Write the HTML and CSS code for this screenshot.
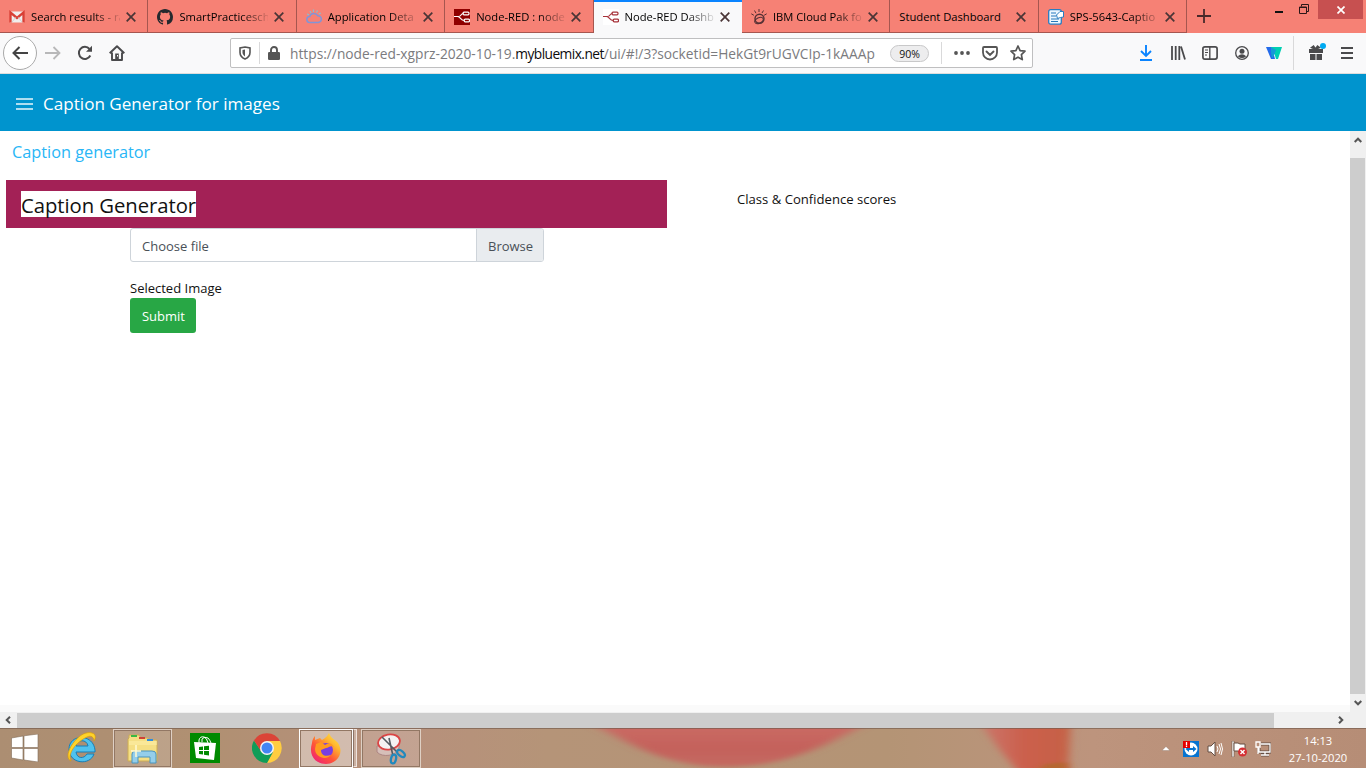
FILE: index.html
```html
<!DOCTYPE html>
<html lang="en">
<head>
<meta charset="utf-8">
<title>Node-RED Dashboard</title>
<link rel="stylesheet" href="styles.css">
</head>
<body>
<svg class="defs" width="0" height="0">
  <symbol id="x" viewBox="0 0 10 10"><path d="M.7.7 9.3 9.3M9.3.7.7 9.3" stroke="#4a3536" stroke-width="1.7" fill="none"/></symbol>
  <symbol id="flow" viewBox="0 0 16 16"><g fill="none" stroke="currentColor" stroke-width="1.200"><path d="M0 7.500h4.500C7.500 7.500 6.500 4.500 9.500 4.500M3.500 7.500C7 7.500 6 11.500 10.500 11.500"/><rect x="9" y="3.200" width="6" height="2.600" rx="1"/><rect x="10.200" y="10.200" width="5.300" height="2.600" rx="1"/></g></symbol>
</svg>
<div class="screen">
  <header class="tabs">
    <div class="tab"><svg class="fav" viewBox="0 0 16 16"><path d="M1 2.500h14v11H1z" fill="#f1eeee"/><path d="M1.500 13.500V3.500L8 9l6.500-5.500v10" fill="none" stroke="#d93f35" stroke-width="2.300"/><path d="m3 13 4-5m6 5L9 8" stroke="#c9c3c3" stroke-width=".7"/></svg><span class="name">Search results - ra</span><svg class="close"><use href="#x"/></svg></div>
    <div class="tab"><svg class="fav" viewBox="0 0 16 16"><path fill="#24292e" d="M8 0C3.580 0 0 3.580 0 8c0 3.540 2.290 6.530 5.470 7.590.4.070.55-.17.55-.38v-1.490c-2.010.37-2.530-.49-2.690-.94-.09-.23-.48-.94-.82-1.130-.28-.15-.68-.52-.01-.53.63-.01 1.080.58 1.230.82.720 1.210 1.870.87 2.330.66.070-.52.28-.87.51-1.070-1.780-.2-3.640-.89-3.640-3.950 0-.87.31-1.590.82-2.150-.08-.2-.36-1.020.08-2.120 0 0 .67-.21 2.200.82a7.400 7.400 0 0 1 4 0c1.530-1.040 2.200-.82 2.200-.82.44 1.100.16 1.920.08 2.120.51.56.82 1.270.82 2.150 0 3.070-1.870 3.750-3.650 3.950.29.25.54.73.54 1.480v2.200c0 .21.15.46.55.38A8 8 0 0 0 16 8c0-4.420-3.580-8-8-8z"/></svg><span class="name">SmartPracticesch</span><svg class="close"><use href="#x"/></svg></div>
    <div class="tab"><svg class="fav" viewBox="0 0 16 16" fill="none"><path d="M4 13.500a3 3 0 0 1-.3-6 4.400 4.400 0 0 1 8-.8 3.400 3.400 0 0 1 .5 6.800z" stroke="#8095d8" stroke-width="1.500"/><path d="M5 4 4 2m3.500.9V.5M10.500 3.500l1-2m1.300 3.500 2-1M1 5l2 .7" stroke="#87bfd2" stroke-width="1.200"/></svg><span class="name">Application Deta</span><svg class="close"><use href="#x"/></svg></div>
    <div class="tab"><svg class="fav flow-dark" viewBox="0 0 16 16"><path fill="#8f0000" d="M0 0h16v16H0z"/><use href="#flow"/></svg><span class="name">Node-RED : node</span><svg class="close"><use href="#x"/></svg></div>
    <div class="tab active"><svg class="fav flow-light" viewBox="0 0 16 16"><path fill="#fff" d="M0 0h16v16H0z"/><use href="#flow"/></svg><span class="name">Node-RED Dashb</span><svg class="close"><use href="#x"/></svg></div>
    <div class="tab"><svg class="fav" viewBox="0 0 16 16" fill="none" stroke="#553034"><circle cx="8.500" cy="9.700" r="4.500" stroke-width="1.400"/><ellipse cx="8" cy="11.500" rx="4.500" ry="2.700" transform="rotate(-25 8 11.500)"/><path d="M8 0v3M3.500 1.500l1.500 2.700M12.500 1.500 11 4M.3 4.800l2.600 1.500m12.800-1.500-2.600 1.500"/></svg><span class="name">IBM Cloud Pak fo</span><svg class="close"><use href="#x"/></svg></div>
    <div class="tab"><span class="name wide">Student Dashboard</span><svg class="close"><use href="#x"/></svg></div>
    <div class="tab"><svg class="fav" viewBox="0 0 16 16"><rect x=".7" y=".7" width="12.600" height="14.500" rx="2" fill="#edf7ff" stroke="#287cc1" stroke-width="1.300"/><path d="M3 4h5M3 7h5M3 10h8M3 12.500h7" stroke="#2779bb" stroke-width="1.200"/><path d="m8.500 6 3.500-3.500h3.500V8l-3 .5-3 1z" fill="#fff" stroke="#287cc1"/></svg><span class="name">SPS-5643-Captio</span><svg class="close"><use href="#x"/></svg></div>
    <svg class="plus" viewBox="0 0 14 14"><path d="M7 0v14M0 7h14" stroke="#48292a" stroke-width="1.800"/></svg>
    <div class="winbtns">
      <svg class="minimize" viewBox="0 0 8 2"><path d="M0 0h8v2H0z" fill="#111"/></svg>
      <svg class="restore" viewBox="0 0 10 10"><path d="M2.500 2.500v-2h7v7h-2M.5 3h7v6.500h-7zM.5 3.500h7" fill="none" stroke="#2b1718"/></svg>
      <div class="exit"><svg viewBox="0 0 8 8"><path d="m.5.5 7 7m0-7-7 7" stroke="#fff" stroke-width="1.700"/></svg></div>
    </div>
  </header>

  <nav class="toolbar">
    <div class="back"><svg viewBox="0 0 16 14"><path d="M16 7H1.500M7.500 1l-6 6 6 6" fill="none" stroke="#444" stroke-width="2"/></svg></div>
    <svg class="forward" viewBox="0 0 16 14"><path d="M0 7h14.500M8.500 1l6 6-6 6" fill="none" stroke="#b8b8b9" stroke-width="1.800"/></svg>
    <svg class="reload" viewBox="0 0 16 16"><path d="M13.300 10.500A6 6 0 1 1 12.500 4" fill="none" stroke="#4a4a4c" stroke-width="2"/><path d="M15 .8v6H9z" fill="#4a4a4c"/></svg>
    <svg class="home" viewBox="0 0 16 16"><path d="m.7 8.300 7.300-7 7.300 7M3 7.500V15h10V7.500" fill="none" stroke="#4a4a4c" stroke-width="1.900" stroke-linejoin="round"/><path d="M6.200 8.500h3.600V15H6.200z" fill="#4a4a4c"/><path d="M8 10h1v1.500H8z" fill="#fff"/></svg>
    <div class="address">
      <svg class="shield" viewBox="0 0 12 14"><path d="M6 1 11 2v4.500c0 3-2 5.200-5 6.500-3-1.300-5-3.500-5-6.500V2z" fill="none" stroke="#555" stroke-width="1.600"/><path d="M6 3.500v7C4.300 9.300 3.500 8 3.500 6.500V4z" fill="#555"/></svg>
      <i class="rule"></i>
      <svg class="lock" viewBox="0 0 12 14"><path d="M3 7V4a3 3 0 0 1 6 0v3" fill="none" stroke="#555" stroke-width="1.900"/><rect y="6" width="12" height="8" rx="1.300" fill="#555"/></svg>
      <span class="url">https://node-red-xgprz-2020-10-19.<b>mybluemix.net</b>/ui/#!/3?socketid=HekGt9rUGVCIp-1kAAAp</span>
      <span class="zoom">90%</span>
      <i class="rule second"></i>
      <svg class="dots" viewBox="0 0 16 4" fill="#555"><circle cx="2" cy="2" r="1.900"/><circle cx="8" cy="2" r="1.900"/><circle cx="14" cy="2" r="1.900"/></svg>
      <svg class="pocket" viewBox="0 0 16 15"><path d="M2 1h12q1 0 1 1v4.500a7 7 0 0 1-14 0V2q0-1 1-1z" fill="none" stroke="#555" stroke-width="1.800"/><path d="M4.500 5.500 8 9l3.500-3.500" fill="none" stroke="#555" stroke-width="1.900" stroke-linecap="round"/></svg>
      <svg class="star" viewBox="0 0 16 16"><path d="m8 1 2.100 4.600 4.900.6-3.600 3.400.9 5L8 12.200l-4.300 2.400.9-5L1 6.200l4.900-.6z" fill="none" stroke="#555" stroke-width="1.700" stroke-linejoin="round"/></svg>
    </div>
    <div class="actions">
      <svg class="download" viewBox="0 0 12 16"><path d="M6 0v11M1 6l5 5 5-5M0 15h12" fill="none" stroke="#0a84ff" stroke-width="1.900"/></svg>
      <svg class="library" viewBox="0 0 15 14"><path d="M1 0v14M4.700 0v14M8.300 0v14M10 .5l4 13" stroke="#4a4a4c" stroke-width="1.800"/></svg>
      <svg class="sidebar" viewBox="0 0 16 14"><rect x=".9" y=".9" width="14.200" height="12.200" rx="2" fill="none" stroke="#4a4a4c" stroke-width="1.700"/><path d="M7.800 1v12" stroke="#4a4a4c" stroke-width="1.400"/><path d="M3 4h3M3 6.500h3M3 9h2" stroke="#4a4a4c"/></svg>
      <svg class="account" viewBox="0 0 14 14"><circle cx="7" cy="7" r="6.300" fill="none" stroke="#4a4a4c" stroke-width="1.300"/><circle cx="7" cy="5.300" r="2.500" fill="#4a4a4c"/><path d="M2.800 10.200Q7 6.500 11.200 10.200 7 14 2.800 10.200" fill="#4a4a4c"/></svg>
      <svg class="wappalyzer" viewBox="0 0 16 12"><path d="M0 0h6l3 12H5z" fill="#246bea"/><path d="M5 0h11l-4 12h-2L8.500 7 6 11z" fill="#00cfb2"/><path d="m5 0 5 3-1.500 4L6 11z" fill="#1798d8"/></svg>
      <i class="rule"></i>
      <svg class="gift" viewBox="0 0 18 18"><path d="M1 6h14v4H1zM2 11h5.500v6H2zM8.500 11H14v6H8.500z" fill="#4a4a4c"/><path d="m7.500 6-2-3-2 1.500L7 6m.5 0 2-3 2 1.500L8 6" fill="none" stroke="#4a4a4c" stroke-width="1.500"/><circle cx="15" cy="3" r="3" fill="#00aaf2"/></svg>
      <svg class="burger" viewBox="0 0 12 12"><path d="M0 1h12M0 6h12M0 11h12" stroke="#4a4a4c" stroke-width="1.900"/></svg>
    </div>
  </nav>

  <section class="app-header">
    <svg viewBox="0 0 17 12"><path d="M0 1h17M0 6h17M0 11h17" stroke="#e8f6fc" stroke-width="1.700"/></svg>
    <h1><span>Caption Generator for images</span></h1>
  </section>

  <div class="viewport">
    <main>
      <h2><span>Caption generator</span></h2>
      <div class="columns">
        <section class="card">
          <div class="banner"><span class="mark">Caption Generator</span></div>
          <form class="upload">
            <div class="file"><span class="choose">Choose file</span><span class="browse">Browse</span></div>
            <div class="selected">Selected Image</div>
            <button type="button"><span>Submit</span></button>
          </form>
        </section>
        <p class="scores">Class &amp; Confidence scores</p>
      </div>
    </main>
    <div class="vscroll"><svg viewBox="0 0 8 6"><path d="m.7 5 3.300-3.300L7.300 5" fill="none" stroke="#555" stroke-width="2"/></svg><div class="vthumb"></div><svg viewBox="0 0 8 6"><path d="M.7 1 4 4.300 7.300 1" fill="none" stroke="#555" stroke-width="2"/></svg></div>
  </div>
  <div class="hscroll"><svg viewBox="0 0 6 8"><path d="M5 .7 1.700 4 5 7.300" fill="none" stroke="#555" stroke-width="2"/></svg><div class="hthumb"></div><svg class="right" viewBox="0 0 6 8"><path d="M1 .7 4.300 4 1 7.300" fill="none" stroke="#555" stroke-width="2"/></svg></div>

  <footer class="taskbar">
    <svg class="wallpaper" viewBox="0 0 1366 40" preserveAspectRatio="none">
      <defs>
        <linearGradient id="wood"><stop offset="0" stop-color="#ac8e72"/><stop offset=".15" stop-color="#b09072"/><stop offset=".29" stop-color="#b7907c"/><stop offset=".4" stop-color="#b59478"/><stop offset=".65" stop-color="#b49475"/><stop offset=".8" stop-color="#bd947d"/><stop offset="1" stop-color="#b68d76"/></linearGradient>
        <linearGradient id="petal" x2="0" y2="1"><stop stop-color="#cd6f68"/><stop offset=".65" stop-color="#c4615b"/><stop offset="1" stop-color="#c46a61"/></linearGradient>
        <linearGradient id="petal2"><stop stop-color="#ca7a70"/><stop offset=".5" stop-color="#cc604d"/><stop offset="1" stop-color="#c56245"/></linearGradient>
        <filter id="soft" filterUnits="userSpaceOnUse" x="540" y="-40" width="580" height="120"><feGaussianBlur stdDeviation="7 2"/></filter>
        <filter id="edge" filterUnits="userSpaceOnUse" x="940" y="-40" width="180" height="120"><feGaussianBlur stdDeviation="5 1"/></filter>
      </defs>
      <path fill="url(#wood)" d="M0 0h1366v40H0z"/>
      <path filter="url(#soft)" fill="url(#petal)" d="M572-14h310l-20 12c-34 18-75 41-135 41-58 0-91-20-123-37z"/>
      <path filter="url(#edge)" fill="url(#petal2)" d="M975-12h96l-2 38-2 28h-40L1000 22z"/>
      <path filter="url(#edge)" fill="#b66731" d="m1034 44 12-8 20-2 3 12z"/>
      <path fill="#735b4d" opacity=".65" d="M0 0h1366v1H0z"/>
    </svg>
    <div class="task start"><svg width="28" height="28" viewBox="0 0 28 28" fill="#fff" stroke="#826b58" stroke-width=".6"><path d="m.5 4 11.500-2v11.500H.5zM13 1.800 27 0v13.500H13zM.5 14.500H12V26L.5 24zM13 14.500h14V28l-14-2z"/></svg></div>
    <div class="task ie"><svg width="32" height="32" viewBox="0 0 32 32"><path d="M29 22C25 34 4 32 4 17 4 2 28 1 30 18v2H11c1 7 8 7 11 2zM11 14h12c-1-7-11-7-12 0z" fill="#4fc2ee" stroke="#177fb7"/><path d="M6 29C-4 25 13-3 27 1c4 1 4 5 2 8 0-4-3-6-7-4C11 10 2 22 6 29z" fill="#ffd32b" stroke="#d99b0d" stroke-width=".7"/></svg></div>
    <div class="task explorer framed"><svg width="32" height="30" viewBox="0 0 32 30"><path d="M2 4V1h10l2 3h7l1 2h8v21H1V5z" fill="#f5df84" stroke="#cead52"/><path d="M4 1h6v2H4z" fill="#37b944"/><path d="M12 3h6v2h-6z" fill="#cf4236"/><path d="M20 5h6v2h-6z" fill="#308ddd"/><path d="M2 8h28M2 10h28" stroke="#fff1ac"/><path d="M5 29V20q0-3 4-3h16q4 0 4 3v9h-6v-6H11v6z" fill="#94ceea" stroke="#4b95bd"/><path d="M9 11v12M4 17h10" stroke="#fffbd4" stroke-width="1.500"/></svg></div>
    <div class="task store"><svg width="30" height="30" viewBox="0 0 30 30"><path fill="#008a00" d="M0 0h30v30H0z"/><path d="M9 10V7q1-4 5-3 3 1 4 6M12 9V6q2-3 6-1 2 2 3 5" fill="none" stroke="#fff" stroke-width="1"/><path d="m4 9 22 1-2 17-18-2z" fill="#fff"/><path d="m9 14 4-.5V17H9zm5-.7 5-.5V17h-5zM9 18h4v3.500L9 21zm5 0h5v4.500l-5-.8z" fill="#008a00"/></svg></div>
    <div class="task chrome"><svg width="30" height="30" viewBox="0 0 30 30"><path d="M15 8h13A15 15 0 0 1 15 30l6-11z" fill="#ffcd40"/><path d="M2 7.500A15 15 0 0 0 15 30l6-11-6 2-6-3z" fill="#0f9d58"/><path d="M2 7.500A15 15 0 0 1 28 8H15l-6 10z" fill="#db4437"/><circle cx="15" cy="15" r="7" fill="#f4f4f4"/><circle cx="15" cy="15" r="5.500" fill="#4285f4"/></svg></div>
    <div class="task firefox framed lit"><svg width="32" height="32" viewBox="0 0 32 32"><defs><linearGradient id="fox" x1="1" y1="0" x2=".2" y2="1"><stop stop-color="#fff44f"/><stop offset=".35" stop-color="#ffb52e"/><stop offset=".65" stop-color="#ff5636"/><stop offset="1" stop-color="#f02076"/></linearGradient></defs><path d="M2 10c0-3 2-6 3-7v4l5-2 2 2c3-2 5-3 7-7 2 6 7 7 9 10 7 11-2 21-12 21C6 31-2 23 2 10z" fill="url(#fox)"/><circle cx="16" cy="17" r="7" fill="#783ee0"/><path d="m6 11 5-2 4 3c4-2 6-3 9 2-4-2-5 1-8 1l-5 2c0 5 4 7 10 5-5 6-16 2-16-6z" fill="#ff9a20"/></svg></div>
    <div class="stack"></div>
    <div class="task snip framed"><svg width="32" height="32" viewBox="0 0 32 32"><path d="M2 13v6c5 6 20 4 22-4v-5z" fill="#d6bfb9" stroke="#ad8582"/><ellipse cx="14" cy="9" rx="11" ry="7.500" transform="rotate(-10 14 9)" fill="#f4f2f2" stroke="#db4545" stroke-width="1.800"/><path d="m7 4 15 15M14 5l4 18" stroke="#555b61" stroke-width="1.600"/><ellipse cx="18.500" cy="26" rx="2.500" ry="4.500" transform="rotate(12 18.500 26)" fill="none" stroke="#2189bd" stroke-width="2.300"/><ellipse cx="26" cy="20.500" rx="2.500" ry="4.500" transform="rotate(-50 26 20.500)" fill="none" stroke="#2189bd" stroke-width="2.300"/></svg></div>
    <div class="tray">
      <svg class="up" viewBox="0 0 8 5"><path d="M0 4.500 4 .5l4 4z" fill="#fff" stroke="#72594b" stroke-width=".3"/></svg>
      <svg class="tv" viewBox="0 0 16 16"><path d="M0 0h16v16H0z" fill="#0874d0"/><circle cx="8" cy="8" r="6.500" fill="#fff"/><path d="m2.500 8 3.500-3v2h4V5l3.500 3-3.500 3V9H6v2z" fill="#0874d0"/><path d="M0 0h7v7H0z" fill="#e60000"/><path d="M3.500 1v3.500M3.500 5v1" stroke="#fff" stroke-width="1.300"/></svg>
      <svg class="vol" viewBox="0 0 16 16"><path d="M1 5h3l4-4v14l-4-4H1z" fill="#fff" stroke="#654f43"/><path d="M10 5q2 3 0 6m2-8q3 5 0 10m2-11q3 6 0 12" fill="none" stroke="#fff" stroke-width="1"/></svg>
      <svg class="flag" viewBox="0 0 16 16"><path d="M1 0h2v16H1z" fill="#fff" stroke="#664e42" stroke-width=".6"/><path d="M3 2h4l2 1h5v8H8l-1-1H3z" fill="#fff" stroke="#664e42"/><circle cx="11.500" cy="11" r="4.500" fill="#d42f32"/><path d="m9.500 9 4 4m0-4-4 4" stroke="#fff" stroke-width="1.400"/></svg>
      <svg class="net" viewBox="0 0 16 16"><path d="M6 3h9v8H4V7m6 4v3m-4 0h8" fill="none" stroke="#654f43" stroke-width="3"/><path d="M6 3h9v8H4V7m6 4v3m-4 0h8M1 1h4v5H1zM3 6v7" fill="none" stroke="#fff" stroke-width="1.300"/></svg>
      <div class="clock"><span>14:13</span><span>27-10-2020</span></div>
    </div>
  </footer>
</div>
</body>
</html>
```
FILE: styles.css
```css
* { box-sizing: border-box; }
body { margin: 0; font-family: "Open Sans", "Noto Sans", sans-serif; color: #111; }
svg { display: block; flex: none; }
.defs { position: absolute; }
.screen { width: 1366px; height: 768px; display: flex; flex-direction: column; overflow: hidden; background: #fff; }

.tabs { height: 33px; flex: none; display: flex; background: #f68175; }
.tab { width: 148.400px; height: 33px; flex: none; display: flex; align-items: center; padding: 2px 0 0 9px; border-right: 1px solid #a6564f; border-bottom: 1px solid #a6564f; }
.tab.active { background: #f9f9fa; border-top: 2px solid #0a84ff; border-bottom: 0; border-right: 0; padding-top: 0; padding-bottom: 1px; }
.fav { width: 16px; height: 16px; margin-right: 6px; }
.flow-dark { color: #fff; }
.flow-light { color: #a63038; }
.name { width: 89px; font-size: 11.200px; line-height: 18px; color: #000; white-space: nowrap; overflow: hidden; -webkit-mask-image: linear-gradient(90deg, #000 62px, transparent 92px); mask-image: linear-gradient(90deg, #000 62px, transparent 92px); }
.name.wide { width: 111px; -webkit-mask-image: none; mask-image: none; }
.close { width: 10px; height: 10px; margin-left: 6px; }
.plus { width: 14px; height: 14px; margin: 9px 0 0 10px; }
.winbtns { display: flex; margin-left: auto; margin-right: 3px; }
.minimize { width: 10px; height: 2px; margin: 11px 15px 0 0; }
.restore { width: 10px; height: 10px; margin: 4px 9px 0 0; }
.exit { width: 45px; height: 19px; background: #c75050; display: flex; align-items: center; justify-content: center; }
.exit svg { width: 8px; height: 8px; }

.toolbar { height: 41px; flex: none; display: flex; align-items: center; background: #f9f9fa; border-bottom: 1px solid #ddd; }
.back { width: 34px; height: 34px; margin-left: 3px; border: 1px solid #aaa; border-radius: 50%; background: #fff; display: flex; align-items: center; justify-content: center; }
.back svg, .forward { width: 16px; height: 14px; }
.forward { margin-left: 8px; }
.reload { width: 16px; height: 16px; margin-left: 16px; }
.home { width: 16px; height: 16px; margin-left: 16px; }
.address { width: 803px; height: 30px; margin-left: 105px; display: flex; align-items: center; border: 1px solid #bfbfc0; border-radius: 2px; background: #fff; }
.shield { width: 12px; height: 14px; margin-left: 8px; }
.rule { width: 1px; height: 22px; background: #d9d9da; flex: none; margin-left: 8px; }
.lock { width: 12px; height: 14px; margin-left: 8px; }
.url { width: 588px; margin-left: 10px; padding-top: 1px; white-space: nowrap; font-size: 13.750px; color: #7b7b7e; }
.url b { font-weight: 400; color: #0c0c0d; letter-spacing: -.55px; }
.zoom { width: 39px; height: 17px; margin-left: 12px; border: 1px solid #c8c8c9; border-radius: 9px; background: #ededee; font-size: 10.500px; line-height: 16px; text-align: center; flex: none; }
.rule.second { margin-left: 12px; }
.dots { width: 16px; height: 4px; margin-left: 12px; }
.pocket { width: 16px; height: 15px; margin-left: 12px; }
.star { width: 16px; height: 16px; margin-left: 12px; }
.actions { display: flex; align-items: center; margin-left: auto; padding-right: 13px; }
.download { width: 12px; height: 16px; margin-right: 19px; }
.library { width: 15px; height: 14px; margin-right: 16px; }
.sidebar { width: 16px; height: 14px; margin-right: 17px; }
.account { width: 14px; height: 14px; margin-right: 17px; }
.wappalyzer { width: 16px; height: 12px; }
.actions .rule { height: 34px; margin: 0 14px 0 11px; }
.gift { width: 18px; height: 18px; margin: 0 15px 2px 0; }
.burger { width: 12px; height: 12px; }

.app-header { height: 57px; flex: none; display: flex; align-items: center; padding: 3px 0 0 16px; background: #0094ce; color: #fff; }
.app-header svg { width: 17px; height: 12px; }
h1, h2, p { margin: 0; font-weight: 400; white-space: nowrap; }
h1 { margin-left: 10px; font-size: 17.100px; line-height: 24px; }
.viewport { height: 581px; flex: none; display: flex; }
main { width: 1350px; border-bottom: 7px solid #fafafa; }
h2 { padding: 9px 0 0 12px; height: 49px; font-size: 16.300px; line-height: 24px; color: #29b6f6; }
.columns { display: flex; }
.card { width: 661px; margin-left: 6px; }
.banner { height: 48px; padding: 11px 15px; background: #a32156; }
.mark { display: inline-block; width: 175px; height: 26px; background: #fff; font-size: 20.300px; letter-spacing: -.05px; line-height: 29px; white-space: nowrap; vertical-align: top; }
.upload { width: 414px; margin-left: 124px; font-size: 13px; color: #111; }
.file { height: 34px; display: flex; border: 1px solid #ced4da; border-radius: 3px; color: #495057; line-height: 35px; overflow: hidden; }
.choose { flex: 1; padding-left: 11px; }
.browse { width: 67px; padding-left: 11px; border-left: 1px solid #ced4da; background: #e9ecef; }
.selected { margin-top: 16px; height: 20px; line-height: 21px; }
button { display: block; width: 66px; height: 35px; padding: 0 0 0 1px; border: 0; border-radius: 3px; background: #28a745; color: #fff; font: 13px "Open Sans", "Noto Sans", sans-serif; }
.scores { margin: 9px 0 0 70px; font-size: 13.100px; line-height: 20px; }
.vscroll { width: 16px; height: 581px; background: #f0f0f0; display: flex; flex-direction: column; }
.vscroll svg { width: 8px; height: 6px; margin: 6px 0 0 4px; }
.vthumb { width: 15px; height: 536px; margin-top: 15px; background: #cdcdcd; }
.hscroll { height: 16px; flex: none; display: flex; align-items: center; background: #f0f0f0; }
.hscroll svg { width: 6px; height: 8px; margin-left: 5px; }
.hthumb { width: 1257px; height: 15px; margin-left: 6px; background: #cdcdcd; }
.hscroll .right { margin-left: 64px; }

.taskbar { height: 40px; flex: none; display: flex; position: relative; }
.wallpaper { position: absolute; left: 0; top: 0; width: 1366px; height: 40px; }
.task { position: relative; height: 40px; display: flex; align-items: center; justify-content: center; flex: none; }
.start { width: 50px; }
.ie { width: 63px; padding-right: 2px; }
.framed { height: 39px; margin-top: 1px; border: 1px solid #dfd0c4; outline: 1px solid #927764; outline-offset: -2px; background: rgba(255,255,255,.17); }
.explorer { width: 59px; }
.store { width: 65px; }
.chrome { width: 60px; }
.firefox { width: 56px; margin-left: 2px; }
.firefox.lit { width: 54px; border: 1px solid #fff; background: rgba(255,255,255,.4); }
.stack { position: relative; width: 4px; height: 38px; margin-top: 1px; border: 1px solid #eee3dd; border-left-color: #8c7468; background: rgba(255,255,255,.3); }
.snip { width: 60px; margin-left: 4px; }
.tray { position: relative; margin-left: auto; display: flex; align-items: center; padding-top: 1px; }
.up { width: 8px; height: 5px; margin-right: 13px; }
.tv, .vol, .flag, .net { width: 16px; height: 16px; margin-right: 8px; }
.clock { width: 78px; margin-right: 9px; display: flex; flex-direction: column; align-items: center; color: #fff; font-size: 11.200px; line-height: 17px; }
```
